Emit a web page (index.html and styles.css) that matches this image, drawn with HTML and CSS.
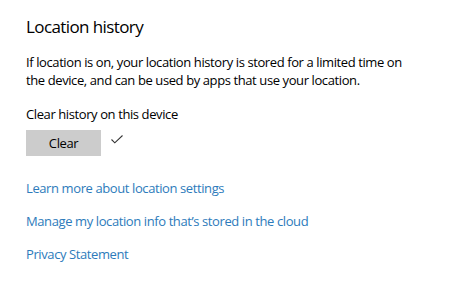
FILE: index.html
```html
<!DOCTYPE html>
<html>
<head>
<meta charset="utf-8">
<link rel="stylesheet" href="styles.css">
</head>
<body>
<main class="page">
  <h1 class="title">Location history</h1>
  <p class="desc">If location is on, your location history is stored for a limited time on the device, and can be used by apps that use your location.</p>
  <div class="clear-label">Clear history on this device</div>
  <div class="clear-row">
    <button class="btn">Clear</button>
    <svg class="check" width="12" height="9" viewBox="0 0 12 9"><path d="M0.5 4.5 L3.8 7.8 L11.5 0.5" fill="none" stroke="#333" stroke-width="1.1"/></svg>
  </div>
  <nav class="links">
    <a class="link" href="#">Learn more about location settings</a>
    <a class="link" href="#">Manage my location info that’s stored in the cloud</a>
    <a class="link" href="#">Privacy Statement</a>
  </nav>
</main>
</body>
</html>
```
FILE: styles.css
```css
html, body {
  margin: 0;
  background: #ffffff;
}
.page {
  padding: 14px 0 0 26px;
  font-family: "Open Sans", "Noto Sans", sans-serif;
  font-size: 13px;
  letter-spacing: -0.4px;
  color: #000;
}
.title {
  margin: 0;
  font-size: 17px;
  letter-spacing: -0.6px;
  font-weight: 400;
  line-height: 26px;
}
.desc {
  margin: 13px 0 0;
  line-height: 18px;
  width: 395px;
}
.clear-label {
  margin-top: 16px;
  line-height: 19px;
}
.clear-row {
  display: flex;
  align-items: center;
  gap: 10px;
  margin-top: 6px;
}
.btn {
  width: 75px;
  height: 26px;
  border: none;
  background: #cccccc;
  font-family: inherit;
  font-size: 13px;
  letter-spacing: inherit;
  color: #000;
  padding: 0;
}
.check {
  margin-top: -8px;
}
.links {
  display: flex;
  flex-direction: column;
  gap: 14px;
  margin-top: 23px;
}
.link {
  line-height: 19px;
  color: #2d7bbb;
  text-decoration: none;
}
```
